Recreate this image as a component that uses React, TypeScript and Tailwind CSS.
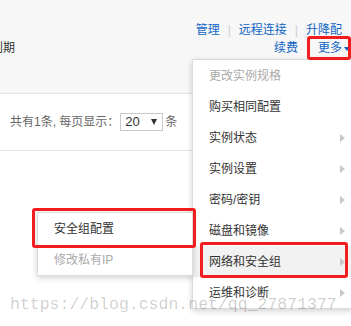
const font = { fontFamily: '"Liberation Sans", "Noto Sans CJK SC", sans-serif' }

const menuItems = [
  { label: '更改实例规格', disabled: true },
  { label: '购买相同配置' },
  { label: '实例状态', sub: true },
  { label: '实例设置', sub: true },
  { label: '密码/密钥', sub: true },
  { label: '磁盘和镜像', sub: true },
  { label: '网络和安全组', sub: true, active: true },
  { label: '运维和诊断', sub: true },
]

function Caret() {
  return <span className="inline-block w-0 h-0 border-l-[5px] border-l-[#c8c8c8] border-y-[4.5px] border-y-transparent" />
}

export default function App() {
  return (
    <div className="relative w-[351px] h-[326px] overflow-hidden bg-white text-[12px] leading-[18px]" style={font}>
      {/* Header band */}
      <div className="h-[94px] bg-[#f7f7f7] border-b border-[#e2e2e2] flex justify-between pt-[21px]">
        <div className="mt-[18px] -ml-[9px] text-[#333]">到期</div>
        <div className="flex flex-col items-end pr-[1px] text-[#1166c4]">
          <div className="flex mr-[8px]">
            <span>管理</span>
            <span className="mx-2 text-[#ccc]">|</span>
            <span>远程连接</span>
            <span className="mx-2 text-[#ccc]">|</span>
            <span>升降配</span>
          </div>
          <div className="flex items-center">
            <span>续费</span>
            <span className="ml-5">更多</span>
            <span className="ml-[2px] mt-[2px] inline-block w-0 h-0 border-x-[3px] border-x-transparent border-t-[4px] border-t-[#1166c4]" />
          </div>
        </div>
      </div>

      {/* Pagination */}
      <div className="h-[57px] border-b border-[#e2e2e2] flex items-center pl-[10px] text-[#666]">
        <span>共有1条, 每页显示：</span>
        <div className="ml-[1px] w-[43px] h-[18px] border border-[#c9c9c9] bg-white flex items-center justify-between pl-[4px] pr-[5px] text-[13px] text-[#333]">
          <span>20</span>
          <span className="inline-block w-0 h-0 border-x-[3.5px] border-x-transparent border-t-[6px] border-t-[#333]" />
        </div>
        <span className="ml-[2px]">条</span>
      </div>

      {/* Dropdown menu */}
      <div className="absolute left-[192px] top-[59px] w-[161px] bg-white border border-[#dcdcdc] shadow-[0_2px_6px_rgba(0,0,0,0.18)] z-10">
        {menuItems.map((item) => (
          <div
            key={item.label}
            className={`h-[31px] flex items-center justify-between pl-4 pr-[7px] ${item.active ? 'bg-[#f2f2f2]' : ''} ${item.disabled ? 'text-[#aaa]' : 'text-[#333]'}`}
          >
            <span>{item.label}</span>
            {item.sub && <Caret />}
          </div>
        ))}
      </div>

      {/* Submenu */}
      <div className="absolute left-[37px] top-[212px] w-[156px] bg-white border border-[#dcdcdc] shadow-[0_2px_6px_rgba(0,0,0,0.18)] z-10">
        <div className="h-[31px] flex items-center pl-4 text-[#333]">安全组配置</div>
        <div className="h-[31px] flex items-center pl-4 text-[#aaa]">修改私有IP</div>
      </div>

      {/* Annotation boxes */}
      <div className="absolute left-[307px] top-[36px] w-[44px] h-[24px] border-[3px] border-[#f21d1d] rounded-[3px] z-20" />
      <div className="absolute left-[200px] top-[242px] w-[148px] h-[36px] border-[3px] border-[#f21d1d] rounded-[3px] z-20" />
      <div className="absolute left-[32px] top-[208px] w-[164px] h-[40px] border-[3px] border-[#f21d1d] rounded-[3px] z-20" />

      {/* Watermark */}
      <div
        className="absolute left-[10px] top-[296px] text-[16.5px] leading-[18px] text-[rgba(0,0,0,0.2)] z-30 whitespace-nowrap"
        style={{ fontFamily: '"Liberation Mono", monospace' }}
      >
        https://blog.csdn.net/qq_27871377
      </div>
    </div>
  )
}
